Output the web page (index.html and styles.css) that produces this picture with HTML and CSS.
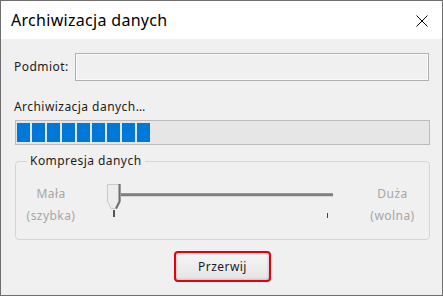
FILE: index.html
```
<!DOCTYPE html>
<html lang="pl">
<head>
<meta charset="utf-8">
<title>Archiwizacja danych</title>
<link rel="stylesheet" href="styles.css">
</head>
<body>
<div class="window">
  <div class="titlebar">
    <span class="title">Archiwizacja danych</span>
    <svg class="close" width="12" height="12" viewBox="0 0 12 12" aria-label="Zamknij">
      <path d="M0.5 0.5 L11.5 11.5 M11.5 0.5 L0.5 11.5" stroke="#000" stroke-width="1" fill="none"/>
    </svg>
  </div>
  <div class="client">
    <div class="subject">
      <span class="subject-label">Podmiot:</span>
      <div class="textbox"></div>
    </div>
    <div class="status">Archiwizacja danych…</div>
    <div class="progress">
      <span class="block"></span><span class="block"></span><span class="block"></span>
      <span class="block"></span><span class="block"></span><span class="block"></span>
      <span class="block"></span><span class="block"></span><span class="block"></span>
    </div>
    <fieldset class="group">
      <legend class="group-title">Kompresja danych</legend>
      <div class="scale">
        <div class="scale-label">Mała<br>(szybka)</div>
        <div class="slider">
          <svg width="232" height="36" viewBox="0 0 232 36">
            <rect x="16" y="10" width="212" height="1" fill="#9a9a9a"/>
            <rect x="16" y="11" width="212" height="2" fill="#7e7e7e"/>
            <rect x="16" y="13" width="212" height="1" fill="#d6d6d6"/>
            <path d="M2.5 1.5 H15.5 V18 L12 25.5 H6 L2.5 18 Z" fill="#ededed" stroke="#c9c9c9" stroke-width="1"/>
            <path d="M14.5 1 V18.5 L11 25.5" stroke="#6f6f6f" stroke-width="2" fill="none"/>
            <rect x="8" y="27" width="2" height="7" fill="#555"/>
            <rect x="222" y="30" width="1" height="5" fill="#444"/>
          </svg>
        </div>
        <div class="scale-label">Duża<br>(wolna)</div>
      </div>
    </fieldset>
    <div class="actions">
      <button class="btn" type="button">Przerwij</button>
    </div>
  </div>
</div>
</body>
</html>
```

FILE: styles.css
```
html, body {
  margin: 0;
  padding: 0;
  background: #f0f0f0;
}

body {
  font-family: "Noto Sans", "DejaVu Sans", sans-serif;
  font-size: 12px;
  letter-spacing: 0.45px;
  color: #1b1b1b;
}

.window {
  width: 443px;
  height: 296px;
  box-sizing: border-box;
  border: 1px solid #6e6e6e;
  display: flex;
  flex-direction: column;
  background: #f0f0f0;
}

.titlebar {
  height: 38px;
  background: #fff;
  display: flex;
  align-items: center;
  justify-content: space-between;
  padding: 0 14px 0 10px;
}

.title {
  font-size: 16px;
  letter-spacing: 0.3px;
  color: #000;
  line-height: 20px;
  margin-top: -1px;
}

.close {
  display: block;
  margin-top: 1px;
}

.client {
  flex: 1;
  padding: 14px 12px 0 14px;
  display: flex;
  flex-direction: column;
}

.subject {
  display: flex;
  align-items: center;
  height: 28px;
}

.subject-label {
  width: 61px;
  margin-left: -1px;
  line-height: 16px;
}

.textbox {
  flex: 1;
  height: 28px;
  box-sizing: border-box;
  margin-right: 1px;
  border: 1px solid #b0b0b0;
  box-shadow: inset 1px 1px 0 #fbfbfb, inset -1px -1px 0 #fbfbfb;
  background: #f0f0f0;
}

.status {
  margin-top: 18px;
  margin-left: -1px;
  line-height: 16px;
}

.progress {
  margin-top: 5px;
  height: 25px;
  box-sizing: border-box;
  border: 1px solid #bcbcbc;
  background: #e6e6e6;
  display: flex;
  gap: 2px;
  padding: 2px 1px;
}

.block {
  width: 13px;
  background: #0078d7;
}

.group {
  margin: 8px 0 0 0;
  padding: 14px 0 12px 0;
  border: 1px solid #d5d5d5;
  border-radius: 4px;
  min-width: 0;
}

.group-title {
  margin-left: 11px;
  padding: 0 3px;
  line-height: 16px;
}

.scale {
  display: grid;
  grid-template-columns: 70px 270px 1fr;
  align-items: start;
}

.scale-label {
  text-align: center;
  line-height: 22px;
  color: #a6a6a6;
}

.slider {
  padding-left: 19px;
}

.slider svg {
  display: block;
}

.actions {
  display: flex;
  justify-content: center;
  margin-top: 11px;
}

.btn {
  width: 97px;
  height: 31px;
  box-sizing: border-box;
  border: 2px solid #e3000f;
  border-radius: 4px;
  background: linear-gradient(#f6f6f6, #e4e4e4);
  box-shadow: inset 0 0 3px rgba(0, 0, 0, 0.28);
  font-family: inherit;
  font-size: 12px;
  letter-spacing: 0.45px;
  color: #1b1b1b;
  padding: 0;
}
```
